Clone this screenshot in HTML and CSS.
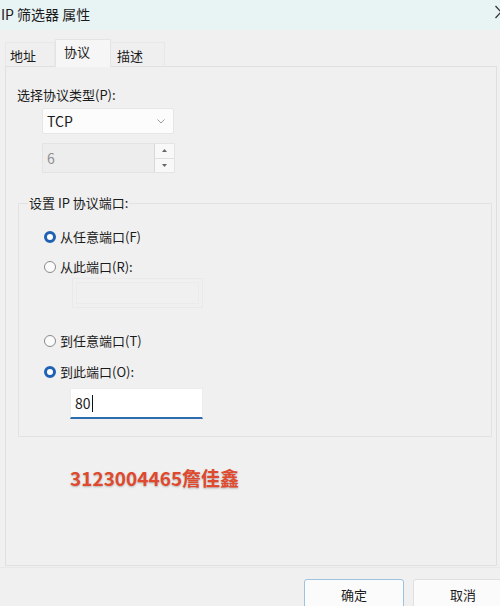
FILE: index.html
```html
<!DOCTYPE html>
<html lang="zh-CN">
<head>
<meta charset="utf-8">
<title>IP 筛选器 属性</title>
<link rel="stylesheet" href="styles.css">
</head>
<body>
<div class="window">
  <div class="titlebar">
    <span class="title">IP 筛选器 属性</span>
    <svg class="close" width="6" height="14" viewBox="0 0 6 14"><path d="M0.5 1 L6 7 L0.5 13" fill="none" stroke="#333" stroke-width="1.3"/></svg>
  </div>
  <div class="tabs">
    <div class="tab tab-addr">地址</div>
    <div class="tab tab-proto active">协议</div>
    <div class="tab tab-desc">描述</div>
  </div>
  <div class="panel">
    <div class="label">选择协议类型(P):</div>
    <div class="select">
      <span>TCP</span>
      <svg class="chev" width="8" height="5" viewBox="0 0 8 5"><path d="M0.5 0.5 L4 4 L7.5 0.5" fill="none" stroke="#9a9a9a" stroke-width="1"/></svg>
    </div>
    <div class="spinner">
      <span class="spin-value">6</span>
      <div class="spin-btns">
        <div class="spin-btn"><svg width="5" height="3" viewBox="0 0 5 3"><path d="M0 3 L2.5 0 L5 3 Z" fill="#666"/></svg></div>
        <div class="spin-btn"><svg width="5" height="3" viewBox="0 0 5 3"><path d="M0 0 L2.5 3 L5 0 Z" fill="#666"/></svg></div>
      </div>
    </div>
    <fieldset class="group">
      <legend>设置 IP 协议端口:</legend>
      <div class="radio-row"><span class="radio checked"></span>从任意端口(F)</div>
      <div class="radio-row"><span class="radio"></span>从此端口(R):</div>
      <div class="port-box disabled"></div>
      <div class="radio-row row-to-any"><span class="radio"></span>到任意端口(T)</div>
      <div class="radio-row row-to-this"><span class="radio checked"></span>到此端口(O):</div>
      <div class="port-box active">80<span class="caret"></span></div>
    </fieldset>
    <div class="stamp">3123004465詹佳鑫</div>
  </div>
  <div class="footer">
    <button class="btn primary">确定</button>
    <button class="btn">取消</button>
  </div>
</div>
</body>
</html>
```
FILE: styles.css
```css
* { box-sizing: border-box; }
html, body {
  margin: 0;
  padding: 0;
  width: 500px;
  height: 606px;
  overflow: hidden;
  background: #f0f0f0;
}
body {
  font-family: "Noto Sans CJK SC", "Noto Sans", sans-serif;
  font-size: 13px;
  color: #1b1b1b;
}
.window {
  width: 500px;
  height: 606px;
  display: flex;
  flex-direction: column;
  background: #f0f0f0;
}
.titlebar {
  height: 30px;
  flex: none;
  background: #e8f3f3;
  display: flex;
  align-items: center;
  justify-content: space-between;
  padding-left: 1px;
  padding-bottom: 2px;
}
.title {
  font-size: 14px;
  line-height: 20px;
}
.close {
  margin-right: -1px;
  margin-top: -4px;
}
.tabs {
  height: 36px;
  flex: none;
  display: flex;
  align-items: flex-end;
  padding-left: 5px;
  position: relative;
  z-index: 1;
}
.tab {
  height: 24px;
  line-height: 22px;
  padding-top: 2px;
  border-top: 1px solid #e8e8e8;
  border-right: 1px solid #e8e8e8;
  background: #efefef;
}
.tab-addr { width: 50px; padding-left: 4px; border-left: 1px solid #e8e8e8; }
.tab-proto { width: 56px; padding-left: 8px; }
.tab-desc { width: 54px; padding-left: 6px; }
.tab.active {
  height: 28px;
  line-height: 22px;
  padding-top: 1px;
  margin-bottom: -1px;
  background: #f6f6f6;
  border: 1px solid #e4e4e4;
  border-bottom: none;
}
.panel {
  height: 500px;
  flex: none;
  margin: 0 3px 0 5px;
  border: 1px solid #e0e0e0;
  background: #f0f0f0;
  padding: 19px 0 0 0;
  display: flex;
  flex-direction: column;
  align-items: flex-start;
}
.label {
  line-height: 18px;
  margin-left: 11px;
}
.select {
  margin: 4px 0 0 36px;
  width: 132px;
  height: 26px;
  background: #fcfcfc;
  border: 1px solid #e6e6e6;
  border-radius: 2px;
  display: flex;
  align-items: center;
  justify-content: space-between;
  padding: 0 8px 0 4px;
  font-size: 14px;
}
.spinner {
  margin: 9px 0 0 36px;
  width: 133px;
  height: 30px;
  display: flex;
  border: 1px solid #e4e4e4;
  background: #ededed;
}
.spin-value {
  flex: 1;
  line-height: 28px;
  padding-left: 4px;
  color: #8e8e8e;
  font-size: 14px;
}
.spin-btns {
  width: 20px;
  display: flex;
  flex-direction: column;
  border-left: 1px solid #d8d8d8;
}
.spin-btn {
  flex: 1;
  display: flex;
  align-items: center;
  justify-content: center;
  background: #f8f8f8;
}
.spin-btn + .spin-btn { border-top: 1px solid #e0e0e0; }
.group {
  align-self: stretch;
  margin: 21px 4px 0 12px;
  padding: 0 0 17px 25px;
  border: 1px solid #e2e2e2;
  height: 243px;
  display: flex;
  flex-direction: column;
  align-items: flex-start;
}
.group legend {
  line-height: 18px;
  margin-left: -16px;
  padding: 0 1px;
}
.radio-row {
  display: flex;
  align-items: center;
  height: 20px;
  line-height: 20px;
  gap: 4px;
  margin-top: 10px;
}
.radio-row:first-of-type { margin-top: 15px; }
.row-to-any { margin-top: 23px; }
.row-to-this { margin-top: 11px; }
.radio {
  width: 12px;
  height: 12px;
  border-radius: 50%;
  border: 1px solid #8a8a8a;
  background: #fbfbfb;
  flex: none;
}
.radio.checked {
  border: 3.5px solid #1f62b4;
  background: #ffffff;
}
.port-box {
  width: 131px;
  height: 30px;
  margin-left: 28px;
  margin-top: 1px;
}
.port-box.disabled {
  border: 1px solid #e9e9e9;
  background: #f0f0f0;
  box-shadow: inset 0 0 0 3px #f0f0f0, inset 0 0 0 4px #ebebeb;
}
.port-box.active {
  width: 133px;
  height: 31px;
  margin-left: 26px;
  margin-top: 6px;
  background: #ffffff;
  border: 1px solid #ececec;
  border-bottom: 2px solid #2d6cae;
  padding-left: 4px;
  line-height: 29px;
  font-size: 14px;
  display: flex;
  align-items: center;
}
.caret {
  display: inline-block;
  width: 1px;
  height: 17px;
  background: #111;
  margin-left: 1px;
}
.stamp {
  margin: 28px 0 0 64px;
  font-size: 19px;
  line-height: 26px;
  font-weight: 700;
  color: #e0492d;
  text-shadow: 0 1px 2px rgba(0, 0, 0, 0.25);
}
.footer {
  flex: none;
  display: flex;
  gap: 9px;
  padding: 11px 0 0 304px;
  border-top: 1px solid #e8e8e8;
  margin-top: 1px;
}
.btn {
  flex: none;
  width: 100px;
  height: 32px;
  font-family: "Noto Sans CJK SC", "Noto Sans", sans-serif;
  font-size: 13px;
  color: #1b1b1b;
  background: #fbfbfb;
  border: 1px solid #e0e0e0;
  border-radius: 3px;
  padding: 0;
  line-height: 30px;
}
.btn.primary {
  border: 1px solid #9cc3df;
}
```
